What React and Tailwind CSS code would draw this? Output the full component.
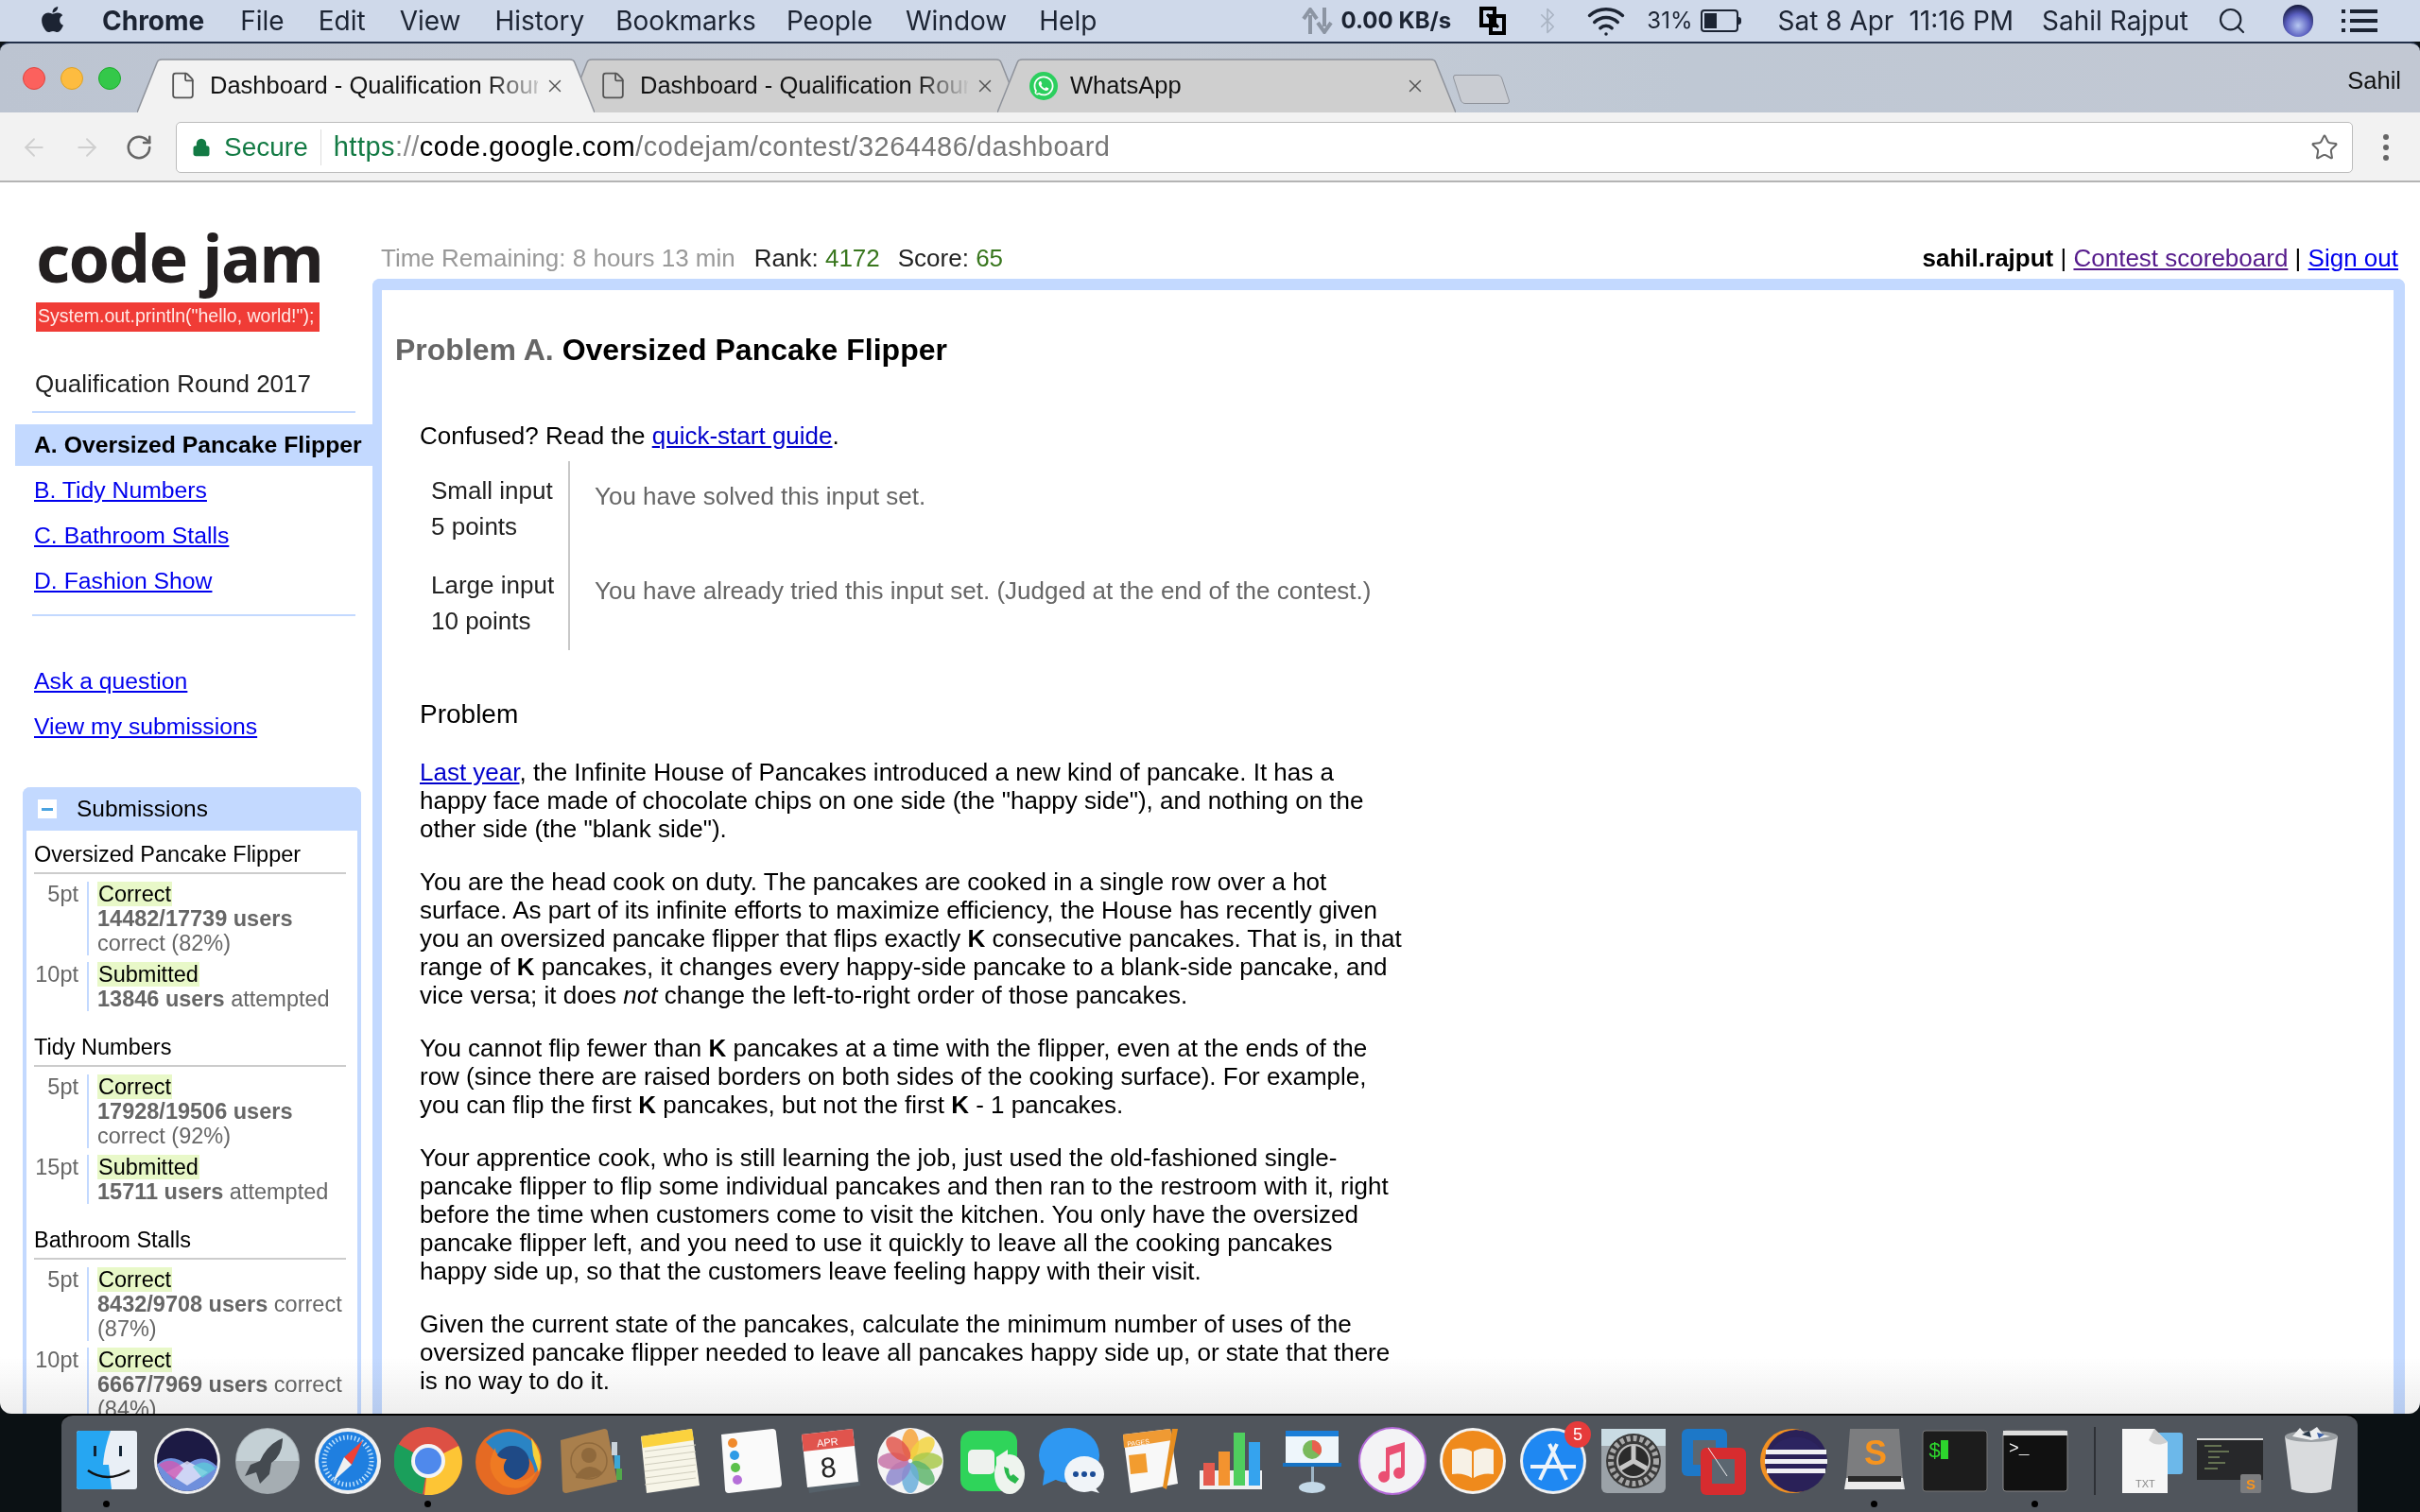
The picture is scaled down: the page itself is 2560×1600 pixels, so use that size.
import {
  ArrowLeft,
  ArrowRight,
  RotateCw,
  Star,
  Lock,
  Search,
  Wifi,
  Bluetooth,
  X,
  File,
} from "lucide-react";
import { FaApple, FaWhatsapp } from "react-icons/fa";

const MENU = [
  ["File", "ml-[38px]"],
  ["Edit", "ml-[36px]"],
  ["View", "ml-[36px]"],
  ["History", "ml-[36px]"],
  ["Bookmarks", "ml-[33px]"],
  ["People", "ml-[32px]"],
  ["Window", "ml-[35px]"],
  ["Help", "ml-[34px]"],
];

const SUBMISSIONS = [
  {
    name: "Oversized Pancake Flipper",
    rows: [
      { pt: "5pt", status: "Correct", bold: "14482/17739 users", rest: "correct (82%)" },
      { pt: "10pt", status: "Submitted", bold: "13846 users", rest: "attempted" },
    ],
  },
  {
    name: "Tidy Numbers",
    rows: [
      { pt: "5pt", status: "Correct", bold: "17928/19506 users", rest: "correct (92%)" },
      { pt: "15pt", status: "Submitted", bold: "15711 users", rest: "attempted" },
    ],
  },
  {
    name: "Bathroom Stalls",
    rows: [
      { pt: "5pt", status: "Correct", bold: "8432/9708 users", rest: "correct (87%)" },
      { pt: "10pt", status: "Correct", bold: "6667/7969 users", rest: "correct (84%)" },
    ],
  },
];

function Tab({ active, width, children, className }) {
  return (
    <div className={`relative h-[57px] shrink-0 ${className}`} style={{ width }}>
      <svg className="absolute inset-0 h-full w-full" viewBox="0 0 480 57" preserveAspectRatio="none">
        <path
          d="M0 57 L21 4 Q22 1 26 1 L454 1 Q458 1 459 4 L480 57"
          fill={active ? "#f2f2f2" : "#cfcfcf"}
          stroke="#8f939b"
          strokeWidth="1.5"
        />
      </svg>
      <div className="relative flex h-full items-center pl-[34px] pr-[26px]">{children}</div>
    </div>
  );
}

function TabTitle() {
  return (
    <>
      <File size={31} strokeWidth={1.4} className="-ml-[1px] shrink-0 text-[#555]" />
      <span className="ml-[13px] w-[347px] whitespace-nowrap bg-[linear-gradient(to_right,#111_84%,#c4c4c4_100%)] bg-clip-text font-['Liberation_Sans'] text-[25.5px] text-transparent">
        Dashboard - Qualification Rour
      </span>
      <X size={22} strokeWidth={1.6} className="ml-[7px] shrink-0 text-[#555]" />
    </>
  );
}

function DockIcons({ name }) {
  switch (name) {
    case "finder":
      return (
        <>
          <rect x="4" y="4" width="64" height="62" rx="3" fill="#e9eff6" />
          <path d="M7 4 H40 Q33 24 32 40 H38 L41 66 H7 Q4 66 4 63 V7 Q4 4 7 4Z" fill="#26a6f2" />
          <rect x="22" y="20" width="3" height="11" fill="#123" />
          <rect x="49" y="20" width="3" height="11" fill="#123" />
          <path d="M16 46 Q36 60 60 46" stroke="#111" strokeWidth="2.5" fill="none" />
        </>
      );
    case "siri":
      return (
        <>
          <ellipse cx="36" cy="36" rx="35" ry="35" fill="#eee" />
          <ellipse cx="36" cy="36" rx="32" ry="32" fill="#1c1a44" />
          <path d="M4 40 Q18 26 36 40 Q52 26 68 42 Q62 66 36 68 Q10 66 4 40Z" fill="#6f8fdc" />
          <path d="M14 48 L36 36 L58 48 L36 62Z" fill="#e6e6fb" opacity="0.8" />
          <path d="M6 40 Q20 30 32 44 L22 56Z" fill="#d05ab4" opacity="0.8" />
          <path d="M66 44 Q56 32 42 42 L52 54Z" fill="#5bd0d8" opacity="0.7" />
        </>
      );
    case "rocket":
      return (
        <>
          <ellipse cx="36" cy="36" rx="34" ry="35" fill="#a5adb2" />
          <path d="M3 36 A33 34 0 0 1 69 36Z" fill="#c4d0d5" />
          <path d="M52 12 Q36 18 28 36 L18 40 L12 52 L24 48 L28 60 L38 50 L40 38 Q52 30 52 12Z" fill="#444a50" />
        </>
      );
    case "safari":
      return (
        <>
          <circle cx="36" cy="36" r="35" fill="#f0f0f0" />
          <circle cx="36" cy="36" r="31" fill="#1f7fe0" />
          <circle cx="36" cy="36" r="25" fill="none" stroke="#bfe0fa" strokeWidth="5" strokeDasharray="1.5 2.5" />
          <path d="M52 14 L32 32 L40 40Z" fill="#ef4135" />
          <path d="M20 58 L32 32 L40 40Z" fill="#f0f0f0" />
        </>
      );
    case "chrome":
      return (
        <>
          <circle cx="36" cy="36" r="36" fill="#dd5044" />
          <path d="M36 36 L4 18 A36 36 0 0 0 30 71Z" fill="#1a9f5b" />
          <path d="M36 36 L68 20 A36 36 0 0 1 32 72Z" fill="#fdc535" />
          <circle cx="36" cy="36" r="18" fill="#f4f4f4" />
          <circle cx="36" cy="36" r="14" fill="#4f89ec" />
        </>
      );
    case "firefox":
      return (
        <>
          <circle cx="36" cy="37" r="35" fill="#e56a23" />
          <path d="M12 16 Q36 -6 62 16 Q74 34 64 50 Q62 30 44 26 Q32 24 26 30Z" fill="#2a84c4" />
          <circle cx="40" cy="38" r="18" fill="#1f4a86" />
          <path d="M22 22 Q8 46 30 62 Q56 72 66 46 Q54 62 38 54 Q26 46 34 34 Q22 34 22 22Z" fill="#ef7a22" />
          <path d="M60 12 Q74 30 68 48 L62 30Z" fill="#f8cf3a" />
        </>
      );
    case "contacts":
      return (
        <>
          <path d="M6 14 L52 2 Q56 2 56 6 L66 58 L12 70 Q8 70 8 66Z" fill="#a97f4c" />
          <rect x="60" y="16" width="6" height="14" fill="#c9d3dc" />
          <rect x="63" y="30" width="6" height="14" fill="#3da7d6" />
          <rect x="65" y="44" width="6" height="12" fill="#52a94b" />
          <circle cx="36" cy="30" r="8" fill="#8f693c" />
          <path d="M22 52 Q34 34 50 48 L50 50 Q36 56 22 54Z" fill="#8f693c" />
          <circle cx="36" cy="36" r="19" fill="none" stroke="#8f693c" strokeWidth="1.5" />
        </>
      );
    case "notes":
      return (
        <>
          <path d="M6 10 L60 2 L68 62 L12 70Z" fill="#f7f5e8" />
          <path d="M6 10 L60 2 L62 14 L8 22Z" fill="#fbd23e" />
          {[26, 33, 40, 47, 54, 61].map((y) => (
            <path key={y} d={`M10 ${y} L64 ${y - 7}`} stroke="#cfcdbd" strokeWidth="1" />
          ))}
        </>
      );
    case "reminders":
      return (
        <>
          <path d="M6 8 L60 2 Q64 2 64 6 L70 60 Q70 64 66 64 L14 70 Q10 70 10 66Z" fill="#fafafa" />
          <circle cx="18" cy="17" r="5" fill="#f08a2c" />
          <circle cx="20" cy="30" r="5" fill="#2f9be6" />
          <circle cx="21" cy="43" r="5" fill="#5cc04a" />
          <circle cx="23" cy="56" r="5" fill="#b56fd8" />
        </>
      );
    case "calendar":
      return (
        <>
          <path d="M6 10 L60 3 L68 62 L14 70Z" fill="#56616a" />
          <path d="M6 8 L60 2 L66 58 L12 64Z" fill="#fbfbfb" />
          <path d="M6 8 L60 2 L62 20 L8 26Z" fill="#e0544d" />
          <text x="22" y="20" fontSize="11" fill="#fff" fontFamily="Liberation Sans" transform="rotate(-6 34 16)">APR</text>
          <text x="26" y="53" fontSize="30" fill="#222" fontFamily="Liberation Sans" transform="rotate(-6 36 44)">8</text>
        </>
      );
    case "photos":
      return (
        <>
          <circle cx="36" cy="36" r="35" fill="#f4f4f4" />
          {[
            ["#f6a33a", 0],
            ["#f2d33f", 45],
            ["#a9c94c", 90],
            ["#5fb56c", 135],
            ["#6aaedb", 180],
            ["#8d87cc", 225],
            ["#c774a8", 270],
            ["#e2574c", 315],
          ].map(([c, r]) => (
            <ellipse key={r} cx="36" cy="18" rx="9" ry="16" fill={c} opacity="0.85" transform={`rotate(${r} 36 36)`} />
          ))}
        </>
      );
    case "facetime":
      return (
        <>
          <rect x="4" y="4" width="60" height="64" rx="12" fill="#2fd45a" />
          <rect x="12" y="24" width="28" height="26" rx="5" fill="#eef2ee" />
          <path d="M42 32 L54 24 V50 L42 42Z" fill="#eef2ee" />
          <ellipse cx="56" cy="50" rx="16" ry="21" fill="#eef4ee" />
          <path d="M50 42 Q51 56 62 60 L66 55 L60 50 L57 52 Q55 49 55 44Z" fill="#29b84c" />
        </>
      );
    case "messages":
      return (
        <>
          <ellipse cx="34" cy="30" rx="32" ry="29" fill="#2f98f2" />
          <path d="M8 46 L6 62 L24 54Z" fill="#2f98f2" />
          <ellipse cx="50" cy="50" rx="21" ry="19" fill="#f0f4f8" />
          <path d="M60 62 L66 70 L52 66Z" fill="#f0f4f8" />
          <circle cx="41" cy="50" r="3" fill="#1b4c96" />
          <circle cx="50" cy="50" r="3" fill="#1b4c96" />
          <circle cx="59" cy="50" r="3" fill="#1b4c96" />
        </>
      );
    case "pages":
      return (
        <>
          <path d="M6 8 L56 2 L64 60 L14 70Z" fill="#f8f8f8" />
          <path d="M6 8 L56 2 L58 14 L7 22Z" fill="#ef9a33" />
          <text x="10" y="18" fontSize="7" fill="#fff" fontFamily="Liberation Sans" transform="rotate(-7 30 14)">PAGES</text>
          <path d="M12 30 L30 28 L32 48 L14 50Z" fill="#f29c2f" />
          <path d="M58 2 L64 2 L52 66 L48 64Z" fill="#e78e1f" />
        </>
      );
    case "numbers":
      return (
        <>
          <rect x="2" y="46" width="66" height="20" fill="#f0f0f0" />
          <rect x="6" y="38" width="12" height="24" fill="#e45a4e" />
          <rect x="22" y="26" width="12" height="36" fill="#f3932f" />
          <rect x="38" y="6" width="12" height="56" fill="#4fcf5e" />
          <rect x="54" y="16" width="12" height="46" fill="#35a3ee" />
        </>
      );
    case "keynote":
      return (
        <>
          <rect x="8" y="4" width="56" height="36" fill="#eef6fb" />
          <rect x="8" y="4" width="56" height="6" fill="#1c7fd8" />
          <rect x="5" y="38" width="62" height="4" fill="#1673c4" />
          <circle cx="36" cy="24" r="10" fill="#79b95c" />
          <path d="M36 24 V14 A10 10 0 0 1 44 30Z" fill="#e8614f" />
          <rect x="35" y="42" width="3" height="22" fill="#9eb4c4" />
          <ellipse cx="36" cy="64" rx="14" ry="6" fill="#c4d9e8" />
        </>
      );
    case "music":
      return (
        <>
          <circle cx="36" cy="36" r="35" fill="#f3f3f5" stroke="#b46ad8" strokeWidth="2" />
          <path d="M29 22 L49 16 V48 A6 6 0 1 1 45 43 V26 L33 30 V52 A6 6 0 1 1 29 47Z" fill="#ea4f72" />
        </>
      );
    case "books":
      return (
        <>
          <circle cx="36" cy="36" r="35" fill="#f4f4f4" />
          <circle cx="36" cy="36" r="32" fill="#ef8a1c" />
          <path d="M14 24 Q26 20 35 26 V54 Q26 48 14 50Z" fill="#f7f1e6" />
          <path d="M58 24 Q46 20 37 26 V54 Q46 48 58 50Z" fill="#f7f1e6" />
        </>
      );
    case "appstore":
      return (
        <>
          <circle cx="36" cy="36" r="35" fill="#f0f0f0" />
          <circle cx="36" cy="36" r="32" fill="#1f88f2" />
          <path d="M22 56 L40 18 M50 56 L32 18" stroke="#eef4fa" strokeWidth="4" />
          <path d="M12 42 H60" stroke="#eef4fa" strokeWidth="4" />
        </>
      );
    case "sysprefs":
      return (
        <>
          <rect x="2" y="2" width="68" height="68" rx="6" fill="#9ba2a8" />
          <path d="M2 2 H70 V20 H2Z" fill="#c9dbe3" />
          <circle cx="36" cy="36" r="29" fill="#3a3a3a" />
          <circle cx="36" cy="36" r="24" fill="none" stroke="#a9a9a9" strokeWidth="6" strokeDasharray="4 3" />
          <circle cx="36" cy="36" r="17" fill="#2b2b2b" stroke="#bdbdbd" strokeWidth="2" />
          <path d="M36 36 V20 M36 36 L22 44 M36 36 L50 44" stroke="#c7c7c7" strokeWidth="5" />
        </>
      );
    case "vmware":
      return (
        <>
          <rect x="2" y="2" width="48" height="50" rx="6" fill="#1d78c8" />
          <rect x="14" y="14" width="24" height="26" fill="#5b6670" />
          <rect x="22" y="22" width="48" height="50" rx="6" fill="#d72c2f" />
          <rect x="34" y="34" width="24" height="26" fill="#5b6670" />
          <path d="M30 22 L50 52" stroke="#f0f0f0" strokeWidth="1" />
        </>
      );
    case "eclipse":
      return (
        <>
          <circle cx="34" cy="36" r="34" fill="#f29122" />
          <circle cx="38" cy="36" r="33" fill="#2a2158" />
          <path d="M8 30 A33 33 0 0 1 68 30Z" fill="#2c2460" />
          <rect x="6" y="24" width="64" height="5" fill="#f0f0f4" />
          <rect x="5" y="34" width="66" height="5" fill="#f0f0f4" />
          <rect x="7" y="44" width="62" height="5" fill="#f0f0f4" />
        </>
      );
    case "sublime":
      return (
        <>
          <path d="M10 2 H62 L66 54 H6Z" fill="#7c7d7f" />
          <path d="M6 54 H66 L68 66 H4Z" fill="#ececec" />
          <rect x="8" y="52" width="56" height="6" fill="#2a2a2a" />
          <text x="25" y="40" fontSize="36" fontWeight="700" fill="#f7941e" fontFamily="Liberation Sans">S</text>
        </>
      );
    case "iterm":
      return (
        <>
          <rect x="2" y="4" width="68" height="64" rx="3" fill="#1c1c1c" stroke="#777" strokeWidth="1" />
          <text x="8" y="32" fontSize="22" fill="#2dd52d" fontFamily="Liberation Mono">$</text>
          <rect x="21" y="14" width="8" height="20" fill="#2dd52d" />
        </>
      );
    case "terminal":
      return (
        <>
          <rect x="2" y="4" width="68" height="64" rx="3" fill="#111" stroke="#888" strokeWidth="1" />
          <rect x="2" y="4" width="68" height="5" fill="#ddd" />
          <text x="8" y="28" fontSize="18" fill="#fff" fontFamily="Liberation Mono">&gt;_</text>
        </>
      );
    case "txt":
      return (
        <>
          <rect x="40" y="6" width="30" height="44" rx="3" fill="#6cb8ea" />
          <path d="M6 2 H40 L54 16 V70 H6Z" fill="#f6f6f6" />
          <path d="M40 2 L54 16 Q42 22 34 14Z" fill="#d0d0d0" />
          <text x="20" y="64" fontSize="11" fill="#888" fontFamily="Liberation Sans">TXT</text>
        </>
      );
    case "stack":
      return (
        <>
          <rect x="0" y="12" width="70" height="44" fill="#27282a" />
          <rect x="0" y="12" width="70" height="2" fill="#ddd" />
          <path d="M8 20 H26 M12 26 H34 M12 32 H24 M12 38 H30 M8 44 H22" stroke="#7b8a60" strokeWidth="1.5" />
          <rect x="46" y="50" width="22" height="20" rx="2" fill="#7c7d7f" />
          <text x="52" y="66" fontSize="15" fontWeight="700" fill="#f7941e" fontFamily="Liberation Sans">S</text>
        </>
      );
    default:
      return (
        <>
          <path d="M8 10 H64 L57 66 Q36 74 15 66Z" fill="#d9dbdd" />
          <ellipse cx="36" cy="10" rx="28" ry="6" fill="#9a9fa3" />
          <path d="M16 10 L24 1 L30 8 L42 0 L48 8 L56 10 L36 14Z" fill="#eceeef" />
          <path d="M26 8 L34 4 L36 11Z" fill="#2a3a4a" />
          <path d="M42 6 L50 8 L44 12Z" fill="#3a5fa8" />
        </>
      );
  }
}

function DockIcon({ name, dot, className }) {
  return (
    <div className={`relative h-[72px] w-[72px] shrink-0 ${className || ""}`}>
      <svg width="72" height="72" viewBox="0 0 72 72">
        <DockIcons name={name} />
      </svg>
      {name === "appstore" && (
        <span className="absolute -right-[4px] -top-[6px] flex h-[28px] w-[28px] items-center justify-center rounded-full bg-[#e63b3b] font-['Liberation_Sans'] text-[18px] text-white">
          5
        </span>
      )}
      {dot && <span className="absolute left-[32px] top-[78px] h-[7px] w-[7px] rounded-full bg-black" />}
    </div>
  );
}

const DOCK = [
  ["finder", true],
  ["siri"],
  ["rocket"],
  ["safari"],
  ["chrome", true],
  ["firefox"],
  ["contacts"],
  ["notes"],
  ["reminders"],
  ["calendar"],
  ["photos"],
  ["facetime"],
  ["messages"],
  ["pages"],
  ["numbers"],
  ["keynote"],
  ["music"],
  ["books"],
  ["appstore"],
  ["sysprefs"],
  ["vmware"],
  ["eclipse"],
  ["sublime", true],
  ["iterm"],
  ["terminal", true],
];

function MenuBar() {
  return (
    <div className="flex h-[44px] shrink-0 items-center bg-[#cfd9ea] pl-[40px] pr-[45px] text-[28px] text-[#1c2433]">
      <FaApple size={31} className="-mt-[4px] text-[#1c2433]" />
      <span className="ml-[37px] font-bold">Chrome</span>
      {MENU.map(([m, ml]) => (
        <span key={m} className={ml}>
          {m}
        </span>
      ))}
      <div className="ml-auto flex items-center">
        <svg width="34" height="28" viewBox="0 0 34 28" className="text-[#8c95a3]">
          <path d="M10 28 V8 M3 12 L10 2 L17 12" fill="none" stroke="currentColor" strokeWidth="4" />
          <path d="M25 0 V20 M18 16 L25 26 L32 16" fill="none" stroke="currentColor" strokeWidth="4" />
        </svg>
        <span className="ml-[9px] text-[24px] font-bold">0.00 KB/s</span>
        <svg width="28" height="30" viewBox="0 0 28 30" className="ml-[30px]">
          <path d="M2 2 H16 V20 H2Z M12 10 H26 V28 H12Z" fill="none" stroke="#000" strokeWidth="4" />
          <path d="M8 8 L20 22" stroke="#000" strokeWidth="3" />
        </svg>
        <Bluetooth size={30} strokeWidth={1.3} className="ml-[29px] text-[#a9b3c2]" />
        <Wifi size={42} strokeWidth={2} className="ml-[26px]" />
        <span className="ml-[22px] text-[24px]">31%</span>
        <div className="ml-[9px] flex items-center">
          <div className="h-[24px] w-[40px] rounded-[4px] border-2 border-[#1c2433] p-[2px]">
            <div className="h-full w-[13px] bg-[#1c2433]" />
          </div>
          <div className="h-[8px] w-[3px] rounded-r bg-[#1c2433]" />
        </div>
        <span className="ml-[38px]">Sat 8 Apr</span>
        <span className="ml-[16px]">11:16 PM</span>
        <span className="ml-[30px]">Sahil Rajput</span>
        <Search size={32} strokeWidth={1.6} className="ml-[30px]" />
        <span className="ml-[38px] h-[34px] w-[32px] rounded-full bg-[radial-gradient(circle_at_50%_65%,#b7c8f2,#5a5fc0_45%,#14183a_80%)]" />
        <svg width="38" height="26" viewBox="0 0 38 26" className="ml-[30px]">
          <path d="M0 3 H4 M9 3 H38 M0 13 H4 M9 13 H38 M0 23 H4 M9 23 H38" stroke="#1c2433" strokeWidth="4" />
        </svg>
      </div>
    </div>
  );
}

function TabBar() {
  return (
    <div className="relative flex h-[75px] shrink-0 items-end rounded-t-[10px] border-t-2 border-[#22304a] bg-[linear-gradient(to_right,#bcc4d1,#c6ccd6_40%,#bfc8d4_70%,#c2c8d3)] pl-[145px] pr-[8px]">
      <div className="absolute left-[24px] top-[25px] flex gap-[16px]">
        <span className="h-[24px] w-[24px] rounded-full border border-[#e0443e] bg-[#fc615d]" />
        <span className="h-[24px] w-[24px] rounded-full border border-[#dea123] bg-[#fdbc40]" />
        <span className="h-[24px] w-[24px] rounded-full border border-[#1aab29] bg-[#34c84a]" />
      </div>
      <Tab width={484} active className="z-10">
        <TabTitle />
      </Tab>
      <Tab width={480} className="-ml-[29px]">
        <TabTitle />
      </Tab>
      <Tab width={485} className="-ml-[25px]">
        <FaWhatsapp size={30} className="shrink-0 rounded-full bg-[#2ccf5e] p-[3px] text-white" />
        <span className="ml-[13px] font-['Liberation_Sans'] text-[25.5px] text-[#111]">WhatsApp</span>
        <X size={22} strokeWidth={1.6} className="ml-auto mr-[6px] shrink-0 text-[#555]" />
      </Tab>
      <div className="mb-[9px] ml-[1px] h-[31px] w-[52px] skew-x-[18deg] rounded-[4px] border border-[#8f939b] bg-[#c9ccd2]" />
      <span className="mb-[15px] ml-auto pr-[12px] font-['Liberation_Sans'] text-[25.5px] text-[#111]">Sahil</span>
    </div>
  );
}

function Toolbar() {
  return (
    <div className="flex h-[74px] shrink-0 items-center border-b-2 border-[#b4b4b4] bg-[#f2f2f2] pl-[21px] pr-[33px] pt-[2px]">
      <ArrowLeft size={30} strokeWidth={1.5} className="text-[#cfcfcf]" />
      <ArrowRight size={30} strokeWidth={1.5} className="ml-[26px] text-[#cfcfcf]" />
      <RotateCw size={30} strokeWidth={2} className="ml-[25px] text-[#666]" />
      <div className="ml-[24px] flex h-[54px] flex-1 items-center rounded-[5px] border border-[#bcbcbc] bg-white pl-[16px] pr-[14px] font-['Liberation_Sans']">
        <Lock size={20} fill="#137a44" strokeWidth={2.4} className="text-[#137a44]" />
        <span className="ml-[14px] text-[28px] text-[#137a44]">Secure</span>
        <span className="mx-[13px] h-[38px] w-[1px] bg-[#ddd]" />
        <span className="text-[29px] tracking-[0.5px]">
          <span className="text-[#137a44]">https</span>
          <span className="text-[#888]">://</span>
          <span className="text-black">code.google.com</span>
          <span className="text-[#777]">/codejam/contest/3264486/dashboard</span>
        </span>
        <Star size={30} strokeWidth={1.6} className="ml-auto text-[#666]" />
      </div>
      <div className="ml-[32px] flex flex-col gap-[5px]">
        <span className="h-[6px] w-[6px] rounded-full bg-[#666]" />
        <span className="h-[6px] w-[6px] rounded-full bg-[#666]" />
        <span className="h-[6px] w-[6px] rounded-full bg-[#666]" />
      </div>
    </div>
  );
}

function Sidebar() {
  return (
    <aside className="w-[394px] shrink-0 pt-[37px]">
      <div className="pl-[38px]">
        <div className="h-[90px] w-[300px] whitespace-nowrap font-['Noto_Sans'] text-[70px] font-bold leading-[84px] tracking-[-1.5px] text-[#231f20]">
          code jam
        </div>
        <div className="h-[31px] w-[300px] whitespace-nowrap bg-[#f03c36] pl-[2px] text-[19.5px] leading-[29px] text-[#ffe9e6]">
          System.out.println("hello, world!");
        </div>
      </div>
      <div className="ml-[34px] mt-[39px] w-[342px] border-b-2 border-[#c3d9ff] pb-[13px] pl-[3px] text-[26px] leading-[32px] text-[#222]">
        Qualification Round 2017
      </div>
      <div className="ml-[16px] mt-[12px] h-[44px] whitespace-nowrap bg-[#c3d9ff] pl-[20px] text-[24.75px] font-bold leading-[44px] text-black">
        A. Oversized Pancake Flipper
      </div>
      <ul className="ml-[36px] mt-[2px] text-[24.75px] leading-[48px] text-[#0000ee] underline">
        <li>B. Tidy Numbers</li>
        <li>C. Bathroom Stalls</li>
        <li>D. Fashion Show</li>
      </ul>
      <div className="ml-[34px] mt-[11px] w-[342px] border-b-2 border-[#c3d9ff]" />
      <ul className="ml-[36px] mt-[45px] text-[24.75px] leading-[48px] text-[#0000ee] underline">
        <li>Ask a question</li>
        <li>View my submissions</li>
      </ul>
      <div className="ml-[24px] mt-[40px] w-[358px] rounded-t-[8px] border-x-4 border-[#c3d9ff]">
        <div className="-mx-[4px] flex h-[46px] items-center rounded-t-[8px] bg-[#c3d9ff] pl-[16px] text-[24.5px] text-black">
          <span className="flex h-[20px] w-[20px] items-center justify-center bg-white">
            <span className="h-[3px] w-[12px] bg-[#4aa3e0]" />
          </span>
          <span className="ml-[21px]">Submissions</span>
        </div>
        <div className="px-[8px] pt-[11px] pr-[12px]">
          {SUBMISSIONS.map((s) => (
            <section key={s.name} className="mb-[24px]">
              <div className="border-b-2 border-[#ccc] pb-[4px] text-[23.5px] leading-[29px] text-black">{s.name}</div>
              <div className="mt-[8px] space-y-[7px]">
                {s.rows.map((r, i) => (
                  <div key={i} className="flex text-[23.5px] leading-[26px]">
                    <div className="w-[47px] shrink-0 text-right text-[#666]">{r.pt}</div>
                    <div className="ml-[9px] flex-1 border-l-2 border-[#c3d9ff] pl-[9px] text-[#666]">
                      <span className="bg-[#e8f8c8] px-[1px] text-black">{r.status}</span>
                      <br />
                      <b>{r.bold}</b> {r.rest}
                    </div>
                  </div>
                ))}
              </div>
            </section>
          ))}
        </div>
      </div>
    </aside>
  );
}

function Main() {
  return (
    <main className="w-[2150px] shrink-0 pt-[58px]">
      <div className="flex h-[44px] items-center pr-[7px] text-[26px] leading-[44px]">
        <span className="ml-[9px] text-[#999]">Time Remaining: 8 hours 13 min</span>
        <span className="ml-[20px] text-[#222]">
          Rank: <span className="text-[#38761d]">4172</span>
        </span>
        <span className="ml-[19px] text-[#222]">
          Score: <span className="text-[#38761d]">65</span>
        </span>
        <span className="ml-auto text-black">
          <b>sahil.rajput</b> | <span className="text-[#551a8b] underline">Contest scoreboard</span> |{" "}
          <span className="text-[#0000ee] underline">Sign out</span>
        </span>
      </div>
      <div className="h-[1300px] rounded-t-[8px] border-l-[10px] border-r-[12px] border-t-[12px] border-[#c3d9ff] bg-white pl-[14px]">
        <h1 className="mt-[44px] text-[32px] font-bold leading-[38px] text-black">
          <span className="text-[#666]">Problem A.</span> Oversized Pancake Flipper
        </h1>
        <div className="ml-[26px]">
          <p className="mt-[57px] text-[26px] leading-[30px] text-black">
            Confused? Read the <span className="text-[#0000cc] underline">quick-start guide</span>.
          </p>
          <div className="mt-[12px] flex h-[200px] w-fit text-[26px] leading-[38px]">
            <div className="w-[159px] border-r-2 border-[#c8c8c8] pl-[12px] pt-[12px] text-[#222]">
              <div>Small input</div>
              <div>5 points</div>
              <div className="mt-[24px]">Large input</div>
              <div>10 points</div>
            </div>
            <div className="pl-[26px] pt-[18px] text-[#666]">
              <div>You have solved this input set.</div>
              <div className="mt-[62px]">You have already tried this input set. (Judged at the end of the contest.)</div>
            </div>
          </div>
          <h2 className="mt-[52px] text-[28px] leading-[32px] text-black">Problem</h2>
          <div className="mt-[30px] space-y-[26px] text-[26px] leading-[30px] text-black">
            <p>
              <span className="text-[#0000cc] underline">Last year</span>, the Infinite House of Pancakes introduced a new kind of pancake. It has a
              <br />
              happy face made of chocolate chips on one side (the "happy side"), and nothing on the
              <br />
              other side (the "blank side").
            </p>
            <p>
              You are the head cook on duty. The pancakes are cooked in a single row over a hot
              <br />
              surface. As part of its infinite efforts to maximize efficiency, the House has recently given
              <br />
              you an oversized pancake flipper that flips exactly <b>K</b> consecutive pancakes. That is, in that
              <br />
              range of <b>K</b> pancakes, it changes every happy-side pancake to a blank-side pancake, and
              <br />
              vice versa; it does <i>not</i> change the left-to-right order of those pancakes.
            </p>
            <p>
              You cannot flip fewer than <b>K</b> pancakes at a time with the flipper, even at the ends of the
              <br />
              row (since there are raised borders on both sides of the cooking surface). For example,
              <br />
              you can flip the first <b>K</b> pancakes, but not the first <b>K</b> - 1 pancakes.
            </p>
            <p>
              Your apprentice cook, who is still learning the job, just used the old-fashioned single-
              <br />
              pancake flipper to flip some individual pancakes and then ran to the restroom with it, right
              <br />
              before the time when customers come to visit the kitchen. You only have the oversized
              <br />
              pancake flipper left, and you need to use it quickly to leave all the cooking pancakes
              <br />
              happy side up, so that the customers leave feeling happy with their visit.
            </p>
            <p>
              Given the current state of the pancakes, calculate the minimum number of uses of the
              <br />
              oversized pancake flipper needed to leave all pancakes happy side up, or state that there
              <br />
              is no way to do it.
            </p>
          </div>
        </div>
      </div>
    </main>
  );
}

export default function App() {
  return (
    <div className="relative flex h-[1600px] w-[2560px] flex-col overflow-hidden bg-[#0b1114] font-['Inter',sans-serif]">
      <MenuBar />
      <TabBar />
      <Toolbar />
      <div className="relative flex h-[1303px] shrink-0 overflow-hidden rounded-b-[12px] bg-white font-['Liberation_Sans',sans-serif]">
        <Sidebar />
        <Main />
        <div className="absolute inset-x-0 bottom-0 h-[60px] bg-gradient-to-b from-transparent to-[#eeeeee] mix-blend-multiply" />
      </div>
      <div className="ml-[65px] flex h-[104px] w-[2429px] shrink-0 rounded-t-[12px] border-t-2 border-black bg-[#50555c] pl-[12px] pt-[12px]">
        <div className="flex gap-[13px]">
          {DOCK.map(([n, d]) => (
            <DockIcon key={n} name={n} dot={d} />
          ))}
        </div>
        <span className="ml-[26px] h-[72px] w-[2px] bg-[#2e3136]" />
        <div className="ml-[22px] flex gap-[13px]">
          <DockIcon name="txt" />
          <DockIcon name="stack" />
          <DockIcon name="trash" />
        </div>
      </div>
    </div>
  );
}
